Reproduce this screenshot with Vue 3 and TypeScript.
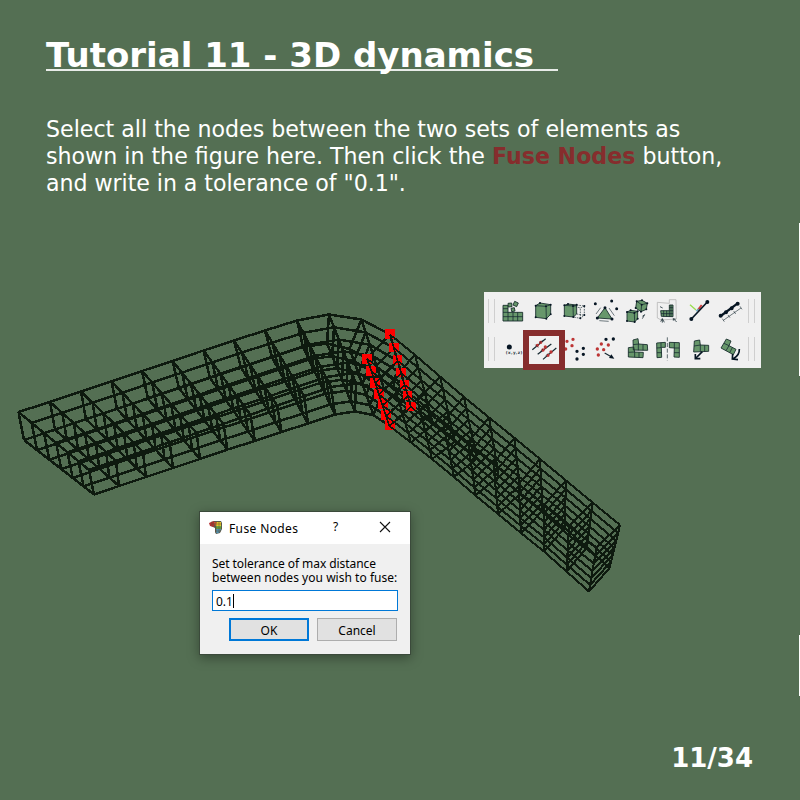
<script setup lang="ts">
type Point = [number, number]

const topBack: Point[] = [
  [18.5, 412], [50, 402], [81, 391.5], [111.5, 381.5], [142, 371], [172.5, 361], [203.5, 350.5], [234, 340.5],
  [265, 330.5], [297, 320.5], [329, 314.5], [361.5, 319.5], [390, 334.5], [415, 355], [440, 376.5], [464, 397],
  [489, 417.5], [514.5, 438], [540, 459], [566, 480.5], [592.5, 502.5], [620, 525],
]
const bottomFront: Point[] = [
  [94, 494.5], [119, 486], [146, 477], [173, 468], [200, 459], [227.5, 449.5], [255, 441], [281.5, 432],
  [308, 423.5], [335, 414.5], [355, 411.5], [373.5, 415], [389.5, 426], [411, 442.5], [432, 459], [454, 477],
  [475.5, 495.5], [498, 514], [521, 533], [544, 551.5], [566.5, 571.5], [589, 591.5],
]

function spread(a: Point, b: Point, n: number): Point[] {
  return Array.from({ length: n + 1 }, (_, i): Point => [
    a[0] + ((b[0] - a[0]) * i) / n,
    a[1] + ((b[1] - a[1]) * i) / n,
  ])
}

const bottomBack: Point[] = [
  ...spread([24, 440], [303, 347], 9), [327, 343.5], [349.5, 349], ...spread([367, 358.5], [544, 505], 7),
  [569, 526.5], [596.5, 547.5],
]
const topFront: Point[] = [
  ...spread([89, 470], [331, 387], 9), [356, 383.5], [384, 389], ...spread([411, 407], [564.5, 528], 7),
  [587, 547.5], [609.5, 568],
]

function across(a: Point, b: Point): Point[] {
  const w = 1.14
  return Array.from({ length: 7 }, (_, i): Point => {
    const s = i / 6
    const t = (s * w) / (1 + (w - 1) * s)
    return [a[0] + (b[0] - a[0]) * t, a[1] + (b[1] - a[1]) * t]
  })
}

const seam = 12
const upper = topBack.map((p, i) => across(p, topFront[i]))
const lower = bottomBack.map((p, i) => across(p, bottomFront[i]))
const line = (pts: Point[]) => 'M' + pts.map((p) => `${p[0].toFixed(1)} ${p[1].toFixed(1)}`).join('L')

function meshPath(from: number, to: number): string {
  const top = upper.slice(from, to + 1)
  const bottom = lower.slice(from, to + 1)
  const parts: string[] = []
  for (let k = 0; k < 7; k++) {
    parts.push(line(top.map((r) => r[k])), line(bottom.map((r) => r[k])))
  }
  top.forEach((row, i) => {
    parts.push(line(row), line(bottom[i]))
    row.forEach((p, k) => parts.push(line([p, bottom[i][k]])))
  })
  return parts.join('')
}
const leftArm = meshPath(0, seam)
const rightArm = meshPath(seam, upper.length - 1)

const backNodes = upper[seam].map((p, i) => ({ x: p[0], y: p[1] - 0.5, s: 10 - i * 0.15 }))
const frontNodes = lower[seam].map((p, i) => ({ x: p[0] + 0.3, y: p[1] - i * 0.25, s: 10 }))
const nodes = [...backNodes, ...frontNodes]

// Edges leaving the selected nodes towards the viewer are drawn over the markers.
const frontPath = [
  line(upper[seam]),
  line(lower[seam]),
  ...upper[seam].map((p, k) => line([p, upper[seam + 1][k]])),
  ...upper[seam].slice(2).map((p, k) => line([p, lower[seam][k + 2]])),
  ...lower[seam].map((p, k) => line([p, lower[seam + 1][k]])),
].join('')
</script>

<template>
  <main class="slide">
    <h1>Tutorial 11 - 3D dynamics</h1>
    <p class="intro">
      Select all the nodes between the two sets of elements as<br />shown in the figure here. Then click the
      <b>Fuse Nodes</b> button,<br /><span class="last">and write in a tolerance of "0.1".</span>
    </p>

    <svg class="mesh" viewBox="0 0 800 800">
      <path class="wire" :d="leftArm" />
      <path class="wire far" :d="rightArm" />
      <rect v-for="(n, i) in nodes" :key="i" class="node" :x="n.x - n.s / 2" :y="n.y - n.s / 2" :width="n.s" :height="n.s" />
      <path class="wire fine" :d="frontPath" />
    </svg>

    <section class="toolbar">
      <div class="row">
        <i class="grip"></i>
        <svg viewBox="0 0 93 114">
          <path class="g" d="M18 40H33V61H77V87H18Z" /><path class="l" d="M18 50H33M18 61H33M18 74H77M33 61V87M48 61V87M62 61V87" />
          <path class="g" d="M33 34l11-1 1 11-11 1zM53 28l11 5-5 11-11-5zM42 49l10-2 2 10-10 2z" />
        </svg>
        <svg viewBox="0 0 93 114">
          <path class="g" d="M23 41L36 33 68 38V67L55 80 23 76Z" /><path class="l" d="M23 41L54 43 68 38M54 43L55 80" />
          <path class="dots" d="M23 41h0M54 43h0M55 80h0M23 76h0M36 33h0M68 38h0M68 67h0" />
        </svg>
        <svg viewBox="0 0 93 114">
          <path class="g" d="M16 40L27 36 53 39V66L43 75 16 72Z" /><path class="l" d="M16 40L42 42 53 39M42 42L43 75" />
          <path class="l dash" d="M53 39L76 42V70L64 79 43 75M76 42L64 48V79M53 66L76 70M42 42L64 48" />
          <path class="dots" d="M16 40h0M42 42h0M43 75h0M16 72h0M27 36h0M53 38h0M76 42h0M64 79h0M76 69h0" />
        </svg>
        <svg viewBox="0 0 93 114">
          <path class="g" d="M45 47L22 78 66 81Z" /><path class="l thin" d="M32 47L18 66M57 48L73 71M28 86L56 88" />
          <path class="dots big" d="M45 47h0M22 78h0M66 81h0M16 35h0M65 27h0M80 50h0" />
        </svg>
        <svg viewBox="0 0 93 114">
          <path class="g" d="M18 60L29 55 50 58V80L41 90 18 87ZM47 28L63 25 79 34 76 52 60 59 44 48Z" />
          <path class="l" d="M18 60L40 63 50 58M40 63L41 90M47 28L62 38 79 34M62 38L60 59M64 80L71 68M64 73L71 68" />
          <path class="dots" d="M18 60h0M40 63h0M41 90h0M18 87h0M29 55h0M50 58h0M50 80h0M47 28h0M63 25h0M79 34h0M76 52h0M60 59h0M44 48h0M62 38h0" />
        </svg>
        <svg viewBox="0 0 93 114">
          <path class="frame" d="M16 31L52 34 52 23 72 23 73 81 28 84 16 78Z" />
          <path class="g" d="M26 56H52V39H63V74L28 73Z" /><path class="l" d="M27 65H63M35 56V74M44 56V74M52 56V74M52 47H63M52 56H63M57 39V74" />
          <path class="l" d="M31 92V80M26 89L31 80 37 91M74 90L64 80M64 86V80L71 82M24 44L32 48" />
        </svg>
        <svg viewBox="0 0 93 114">
          <path class="axis lime" d="M21 38L39 54" /><path class="axis red" d="M44 55L56 39" /><path class="axis blue" d="M40 58L47 51" />
          <path class="bar" d="M25 81L73 30" /><path class="dots large" d="M25 81h0M73 30h0" />
        </svg>
        <svg viewBox="0 0 93 114">
          <path class="bar heavy" d="M20 72L70 35" /><path class="dots large" d="M20 71h0M36 61h0M53 49h0M71 35h0" />
          <path class="l thin" d="M28 85L81 48M25 80L31 89M78 43L84 52M42 69L48 77M59 57L65 66" />
        </svg>
        <i class="grip end"></i>
      </div>
      <div class="row">
        <i class="grip"></i>
        <svg viewBox="0 0 93 114">
          <circle class="k" cx="37" cy="51" r="7.5" /><text class="xyz" x="51" y="73" text-anchor="middle" textLength="50">(x,y,z)</text>
        </svg>
        <svg viewBox="0 0 93 114">
          <path class="l wide" d="M13 59L53 26M29 73L70 42M45 88L85 54" />
          <path class="dots red huge" d="M28 46h0M38 37h0M45 60h0M52 51h0M60 76h0M69 66h0" />
          <path class="l thin" d="M22 44L31 53M44 30L35 39M37 64L45 57M52 79L62 69" />
        </svg>
        <svg viewBox="0 0 93 114">
          <path class="dots red huge" d="M24 34h0M42 28h0M39 47h0M20 57h0" /><path class="dots huge" d="M54 64h0M73 55h0M73 73h0M54 87h0" />
        </svg>
        <svg viewBox="0 0 93 114">
          <path class="dots red huge" d="M34 42h0M55 45h0M22 57h0M41 59h0M25 75h0" /><path class="dots huge" d="M48 28h0M70 27h0" />
          <path class="l wide" d="M44 69L65 81" /><path class="k" d="M73 86L57 84 64 73Z" />
        </svg>
        <svg viewBox="0 0 93 114">
          <path class="g" d="M36 30L51 26 53 42 79 44 80 61 37 60ZM22 53L38 51 41 66 67 67 66 83 22 81Z" />
          <path class="l" d="M36 44L53 42M52 42V61M66 43V61M22 67L41 66M41 66V82M54 67V82" />
        </svg>
        <svg viewBox="0 0 93 114">
          <path class="g" d="M14 39L40 37V52H28L29 82 15 83ZM52 37L82 38 82 82 66 81 67 54 52 53Z" />
          <path class="l" d="M27 38V53L14 54M15 68H29M67 38V54H82M66 68H82" /><path class="l mirror" d="M46 22V91" />
        </svg>
        <svg viewBox="0 0 93 114">
          <path class="g" d="M34 33L50 30 52 45 77 46V64L32 66Z" /><path class="l" d="M33 48L52 45V65M65 46V65" />
          <path class="bar" d="M58 65L39 84" /><path class="bar" d="M37 72V86H52" />
        </svg>
        <svg viewBox="0 0 93 114">
          <path class="g" d="M37 27L51 33 45 47 66 58 58 74 21 54Z" /><path class="l" d="M30 40L45 47 36 62M55 53L47 68" />
          <path class="bar" d="M76 57Q77 76 58 86M56 72L55 87 72 89" />
        </svg>
        <i class="grip end"></i>
      </div>
      <div class="highlight"></div>
    </section>

    <section class="dialog">
      <header>
        <svg class="logo" viewBox="0 0 14 15">
          <path d="M1 3L5 1 12 1 13 3V9L11 13 7 14 6 12V8L2 6Z" fill="#555b4f" />
          <path d="M0 3L5 1V7L1 6Z" fill="#b52f31" /><path d="M5 2H8V5L6 6Z" fill="#d85a35" />
          <path d="M8 2H12V6H7V4Z" fill="#e4c42c" /><path d="M7 6H12V9H7Z" fill="#65ae40" /><path d="M7 9H12L10 13H7Z" fill="#4b94b8" />
          <path d="M3 1V6M7 2V13M10 1V13M2 4H13M6 8H13M6 11H12" stroke="#654c32" stroke-width=".5" />
        </svg>
        <span class="caption">Fuse Nodes</span>
        <span class="help">?</span>
        <svg class="close" viewBox="0 0 12 12"><path d="M1 1L11 11M11 1L1 11" /></svg>
      </header>
      <div class="body">
        <p><span class="first">Set tolerance of max distance</span><br /><span class="second">between nodes you wish to fuse:</span></p>
        <div class="field">0.1<i></i></div>
        <div class="buttons"><button class="primary">OK</button><button>Cancel</button></div>
      </div>
    </section>

    <i class="edge upper"></i>
    <i class="edge lower"></i>
    <footer>11/34</footer>
  </main>
</template>

<style>
body { margin: 0; background: #546f53; }
</style>

<style scoped>
.slide { position: relative; box-sizing: border-box; width: 800px; height: 800px; padding: 35px 46px 0; overflow: hidden; background: #546f53; color: #fff; font-family: "DejaVu Sans", sans-serif; display: flex; flex-direction: column; }
h1 { margin: 0; width: 512px; height: 34px; border-bottom: 2px solid #e8ece8; font-size: 34px; line-height: 41px; font-weight: bold; white-space: nowrap; }
.intro { margin: 45px 0 0; font-size: 22.13px; line-height: 27px; white-space: nowrap; }
.intro b { color: #862d2d; }
.intro .last { letter-spacing: -.05px; }
footer { margin: auto 1px 26px auto; font-size: 26px; line-height: 32px; font-weight: bold; }

.mesh { position: absolute; left: 0; top: 0; width: 800px; height: 800px; }
.wire { fill: none; stroke: #0e1a0f; stroke-width: 2.5; shape-rendering: crispEdges; }
.wire.far { stroke-width: 2.1; }
.wire.fine { stroke-width: 1.6; }
.node { fill: #f00; shape-rendering: crispEdges; }

.toolbar { position: absolute; left: 484px; top: 292px; width: 277px; height: 76px; background: #f0f0f0; }
.row { display: flex; height: 38px; }
.row svg { width: 31px; height: 38px; flex: none; overflow: visible; }
.grip { box-sizing: border-box; flex: none; width: 7px; height: 24px; margin: 7px 2px 0 4px; border: solid #cfcfcf; border-width: 0 1px; }
.grip.end { margin-left: 3px; }
.highlight { position: absolute; left: 39px; top: 38px; box-sizing: border-box; width: 42px; height: 40px; border: 6px solid #862d2d; }
.g { fill: #67976b; stroke: #152b2a; stroke-width: 2.6; }
.l { fill: none; stroke: #152830; stroke-width: 2.3; }
.l.dash { stroke-width: 2; stroke-dasharray: 5 3; }
.l.thin { stroke-width: 1.8; }
.l.wide { stroke-width: 3.6; }
.l.mirror { stroke-dasharray: 12 5; stroke-width: 2; }
.frame { fill: none; stroke: #aaa; stroke-width: 2; }
.bar { fill: none; stroke: #061523; stroke-width: 5; }
.bar.heavy { stroke-width: 7; }
.dots { fill: none; stroke: #061523; stroke-width: 6; stroke-linecap: round; }
.dots.big { stroke-width: 9; }
.dots.huge { stroke-width: 10; }
.dots.large { stroke-width: 12; }
.dots.red { stroke: #bd3434; }
.k { fill: #061523; }
.axis { fill: none; stroke-width: 4; }
.axis.lime { stroke: #9ade4e; }
.axis.red { stroke: #c73b3b; stroke-width: 6; }
.axis.blue { stroke: #64a8c3; }
.xyz { font: bold 12px "DejaVu Sans", sans-serif; fill: #26333c; }

.dialog { position: absolute; left: 199px; top: 511px; box-sizing: border-box; width: 212px; height: 144px; border: 1px solid #3b4a3b; background: #f0f0f0; color: #000; font-family: "Noto Sans", sans-serif; box-shadow: 0 3px 11px rgba(0, 0, 0, .35); }
header { height: 32px; background: #fff; display: flex; align-items: center; font-size: 12px; }
.logo { width: 14px; height: 15px; margin: 0 6px 2px 9px; }
.caption { width: 103px; letter-spacing: .38px; white-space: nowrap; }
.help { width: 7px; margin-bottom: 3px; text-align: center; }
.close { width: 12px; height: 12px; margin: 0 0 3px 40px; }
.close path { stroke: #111; stroke-width: 1.1; }
.body { padding: 13px 12px 0; font-size: 12px; line-height: 14px; }
.body p { margin: 0; white-space: nowrap; }
.first { letter-spacing: -.07px; }
.second { letter-spacing: .03px; }
.field { box-sizing: border-box; display: flex; align-items: center; height: 21px; margin-top: 5px; padding: 2px 2px 0 3px; border: 1px solid #0078d7; background: #fff; }
.field i { width: 1px; height: 14px; background: #000; margin-bottom: 1px; }
.buttons { display: flex; justify-content: flex-end; gap: 8px; margin: 7px 1px 0 0; }
button { box-sizing: border-box; width: 80px; height: 23px; padding: 2px 0 0; border: 1px solid #adadad; background: #e1e1e1; color: #000; font: inherit; line-height: 18px; }
button.primary { border: 2px solid #0078d7; }

.edge { position: absolute; right: 0; width: 1px; background: #fff; }
.edge.upper { top: 223px; height: 153px; }
.edge.lower { top: 635px; height: 61px; }
</style>
